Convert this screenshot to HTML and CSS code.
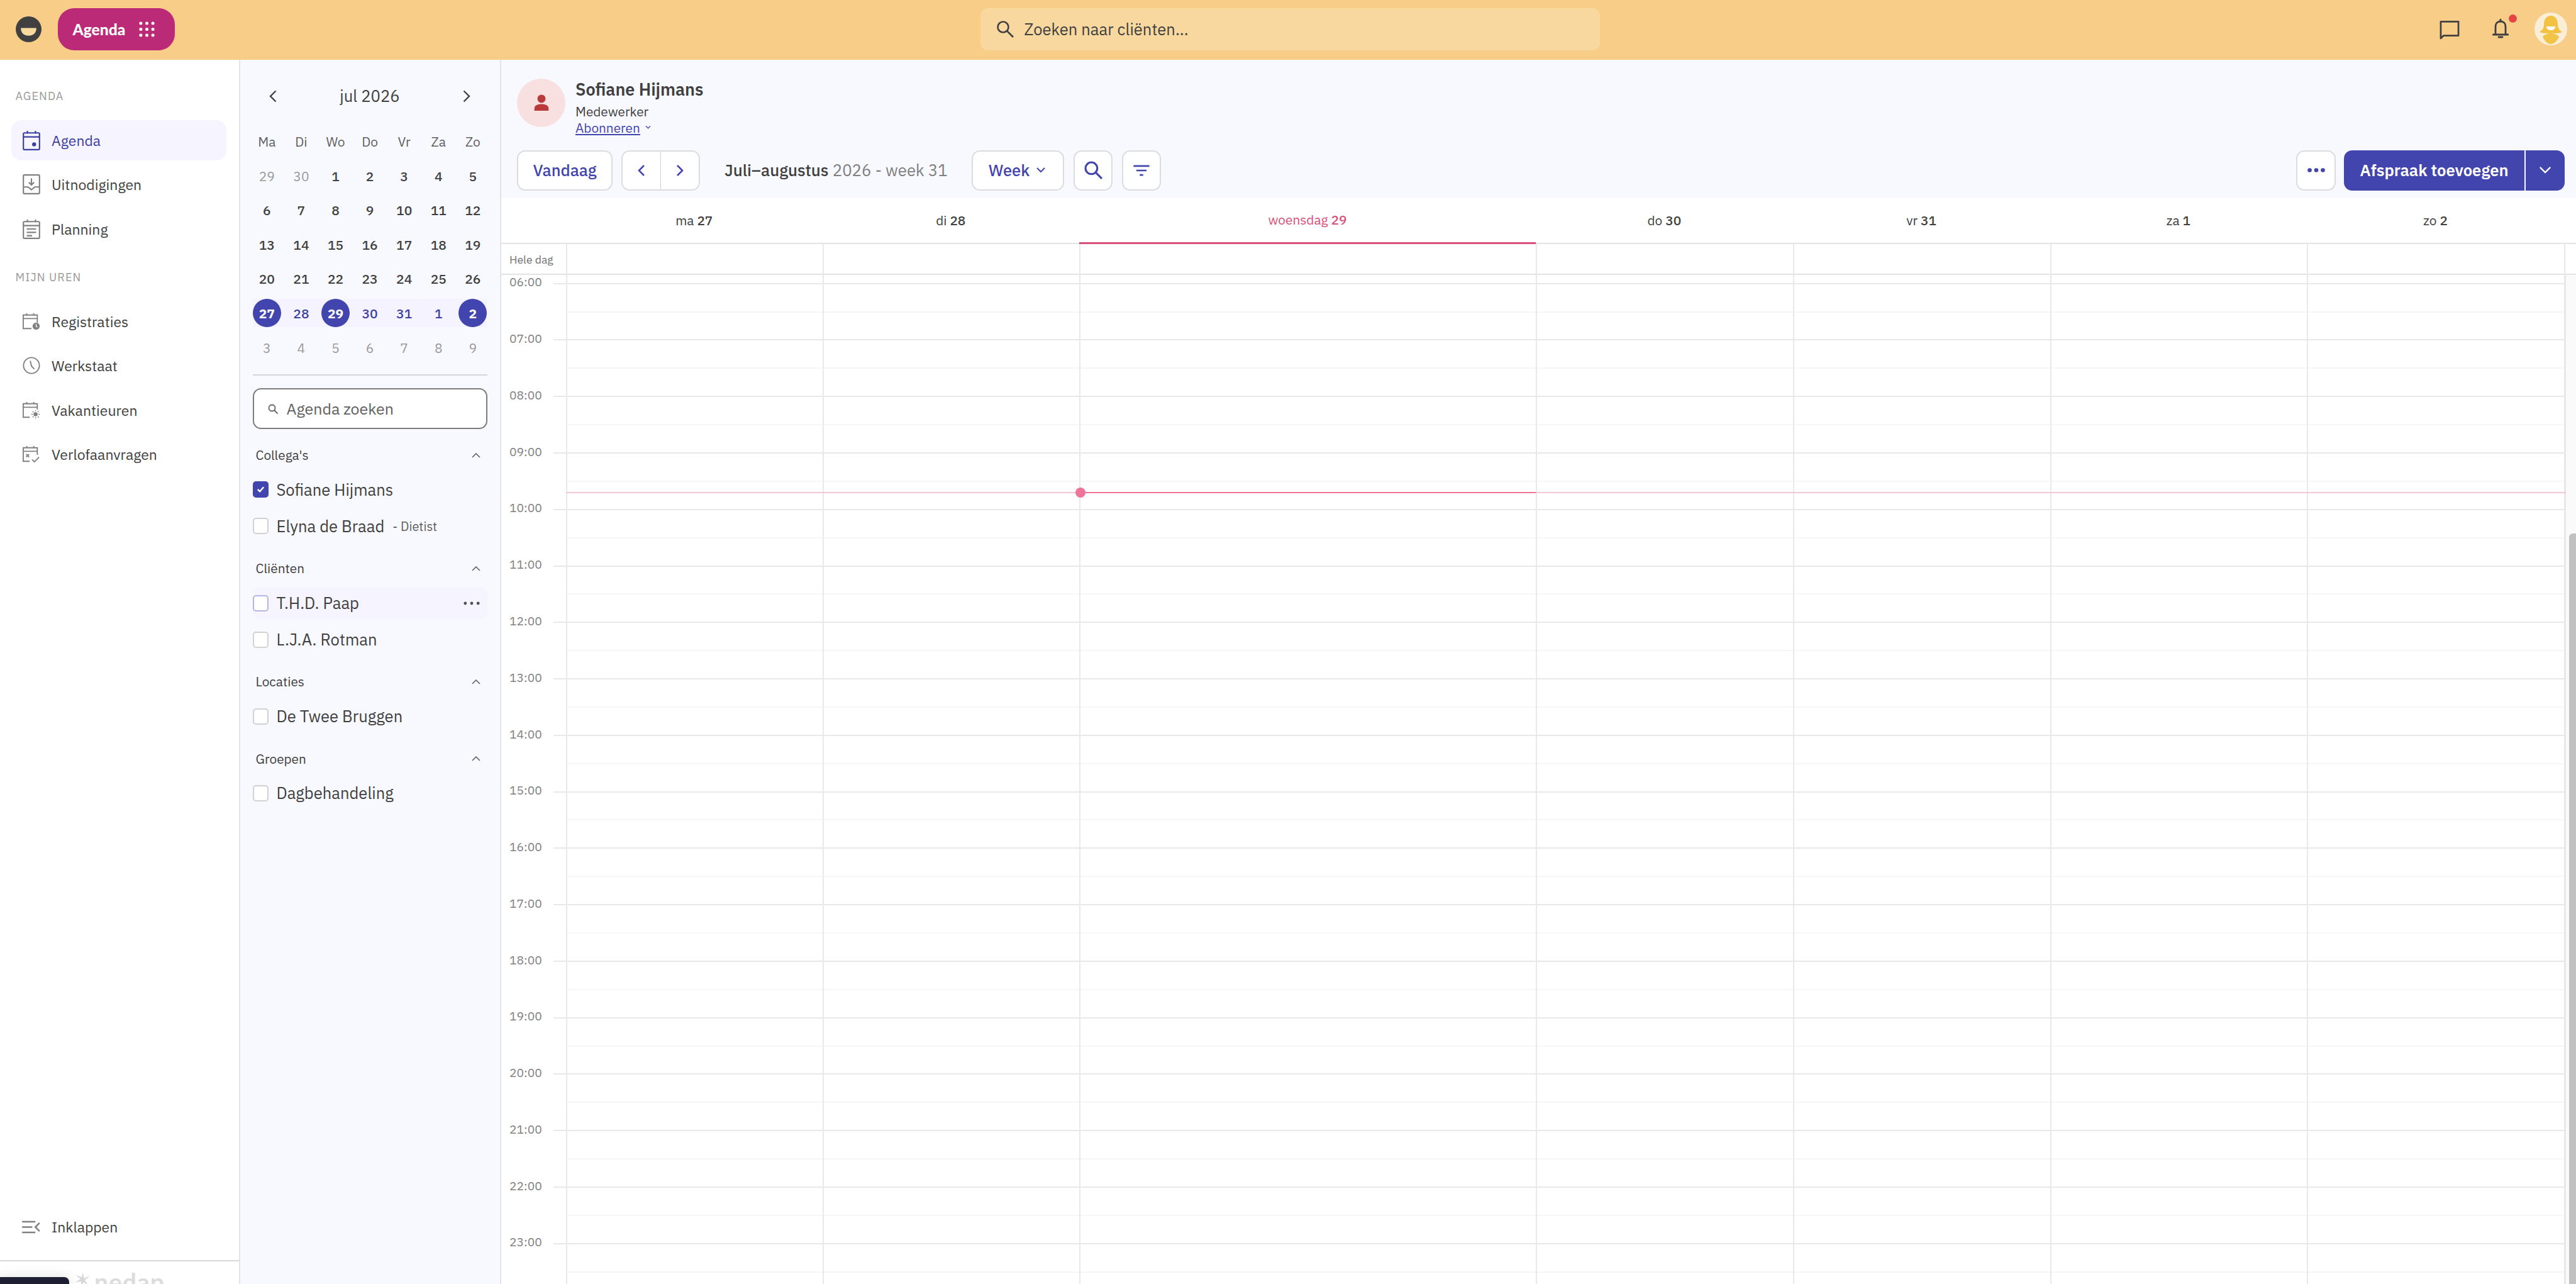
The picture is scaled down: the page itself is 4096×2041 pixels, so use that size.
FILE: index.html
```html
<!DOCTYPE html>
<html lang="nl">
<head>
    <meta charset="UTF-8">
    <title>Agenda</title>
    <link rel="stylesheet" href="styles.css">
</head>
<body>
    <header class="topbar">
        <svg class="logo" viewBox="0 0 40 40"><circle cx="20" cy="20" r="20" fill="#404040"/><path d="M8 18h24c0 8-5 12-12 12S8 26 8 18z" fill="#f8d9a0"/></svg>
        <button class="app-button">
            <span>Agenda</span>
            <svg class="app-dots" viewBox="0 0 26 26" fill="#fff"><circle cx="3" cy="3" r="2.6"/><circle cx="13" cy="3" r="2.6"/><circle cx="23" cy="3" r="2.6"/><circle cx="3" cy="13" r="2.6"/><circle cx="13" cy="13" r="2.6"/><circle cx="23" cy="13" r="2.6"/><circle cx="3" cy="23" r="2.6"/><circle cx="13" cy="23" r="2.6"/><circle cx="23" cy="23" r="2.6"/></svg>
        </button>
        <div class="client-search">
            <svg class="client-search-icon" viewBox="0 0 28 28" fill="none" stroke="#404040" stroke-width="2.6"><circle cx="11" cy="11" r="8.5"/><path d="M17.5 17.5 27 27"/></svg>
            <span>Zoeken naar cliënten...</span>
        </div>
        <div class="top-actions">
            <svg class="top-chat" viewBox="0 0 32 32" fill="none" stroke="#404040" stroke-width="2.8"><path d="M1.5 30V2.5h29v23H6z" stroke-linejoin="round"/></svg>
            <span class="bell-wrap">
                <svg class="top-bell" viewBox="0 0 26 32" fill="none" stroke="#404040" stroke-width="2.8"><path d="M1 25h24M5 25V12c0-5 3-8 8-8s8 3 8 8v13" stroke-linecap="round"/><path d="M13 0v4M10 29h6" stroke-linecap="round"/></svg>
                <span class="bell-dot"></span>
            </span>
            <svg class="top-avatar" viewBox="0 0 52 52"><circle cx="26" cy="26" r="26" fill="#fbeed6"/><path d="M26 5c-8 0-11 7-11 14 0 6-3 9-7 12 6 3 30 3 36 0-4-3-7-6-7-12 0-7-3-14-11-14z" fill="#f4c242"/><path d="M19 22h14c0 4-3 6-7 6s-7-2-7-6z" fill="#fff"/><path d="M13 38c3-3 8-5 13-5s10 2 13 5c-3 8-8 12-13 12s-10-4-13-12z" fill="#f1c446"/></svg>
        </div>
    </header>

    <div class="layout">
        <aside class="sidebar">
            <div class="nav-label">AGENDA</div>
            <nav class="nav-list">
                <a class="nav-item active">
                    <svg class="nav-icon" viewBox="0 0 26 30" fill="none" stroke="currentColor" stroke-width="2"><rect x="1" y="4" width="24" height="25" rx="1.5"/><path d="M1 10h24M7 1v4M19 1v4"/><circle cx="17" cy="21" r="3" fill="currentColor" stroke="none"/></svg>
                    Agenda
                </a>
                <a class="nav-item">
                    <svg class="nav-icon" viewBox="0 0 26 30" fill="none" stroke="#808080" stroke-width="2"><rect x="1" y="1" width="24" height="28" rx="1.5"/><path d="M13 6v10M9 12l4 4 4-4M1 19h7l5 4 5-4h7"/></svg>
                    Uitnodigingen
                </a>
                <a class="nav-item">
                    <svg class="nav-icon" viewBox="0 0 26 30" fill="none" stroke="#808080" stroke-width="2"><rect x="1" y="4" width="24" height="25" rx="1.5"/><path d="M1 10h24M7 1v4M19 1v4M6 15h14M6 20h14M6 25h8"/></svg>
                    Planning
                </a>
            </nav>
            <div class="nav-label nav-label-second">MIJN UREN</div>
            <nav class="nav-list">
                <a class="nav-item">
                    <svg class="nav-icon" viewBox="0 0 30 30" fill="none" stroke="#808080" stroke-width="2"><path d="M15 27H1V4h24v13M1 10h24M7 1v4M19 1v4"/><circle cx="23" cy="23" r="6" fill="#808080" stroke="none"/><path d="M23 19v4l2 2" stroke="#fff" stroke-width="1.4"/></svg>
                    Registraties
                </a>
                <a class="nav-item">
                    <svg class="nav-icon" viewBox="0 0 30 30" fill="none" stroke="#808080" stroke-width="2"><circle cx="15" cy="15" r="13.5"/><path d="M13 7l2 9 5 5"/></svg>
                    Werkstaat
                </a>
                <a class="nav-item">
                    <svg class="nav-icon" viewBox="0 0 30 30" fill="none" stroke="#808080" stroke-width="2"><path d="M12 27H1V4h24v10M1 10h24M7 1v4M19 1v4"/><circle cx="22" cy="22" r="3.5" fill="#808080" stroke="none"/><path d="M22 15v2M22 27v2M15 22h2M27 22h2M17 17l1.500 1.500M26 26l1.500 1.500M17 27l1.500-1.500M26 18l1.500-1.500" stroke-width="1.500"/></svg>
                    Vakantieuren
                </a>
                <a class="nav-item">
                    <svg class="nav-icon" viewBox="0 0 30 30" fill="none" stroke="#808080" stroke-width="2"><path d="M12 27H1V4h24v12M1 10h24M7 1v4M19 1v4M6 15l5 5M11 15l-5 5M16 24l4 4 8-8"/></svg>
                    Verlofaanvragen
                </a>
            </nav>
            <a class="nav-item collapse">
                <svg class="collapse-icon" viewBox="0 0 30 22" fill="none" stroke="#808080" stroke-width="2.600"><path d="M0 2h22M0 11h17M0 20h22M29 4l-7 7 7 7"/></svg>
                Inklappen
            </a>
            <div class="sidebar-foot">
                <div class="foot-tab"></div>
                <svg class="nedap-star" viewBox="0 0 26 26" fill="#d8d8d8"><path d="M13 0l1.500 10L24 6l-8 7 6 9-8-6-5 9 1-10-9 1 8-5-8-6 10 3z"/></svg>
                <span class="nedap-text">nedap</span>
            </div>
        </aside>

        <section class="panel">
            <div class="month-head">
                <svg class="chev" viewBox="0 0 12 20" fill="none" stroke="#404040" stroke-width="2.400"><path d="M10.500 1.500 2 10l8.500 8.500"/></svg>
                <span class="month-title">jul 2026</span>
                <svg class="chev" viewBox="0 0 12 20" fill="none" stroke="#404040" stroke-width="2.400"><path d="M1.500 1.500 10 10l-8.500 8.500"/></svg>
            </div>
            <div class="month-grid">
                <div class="cell day-name">Ma</div><div class="cell day-name">Di</div><div class="cell day-name">Wo</div><div class="cell day-name">Do</div><div class="cell day-name">Vr</div><div class="cell day-name">Za</div><div class="cell day-name">Zo</div>
                <div class="cell faded">29</div><div class="cell faded">30</div><div class="cell">1</div><div class="cell">2</div><div class="cell">3</div><div class="cell">4</div><div class="cell">5</div>
                <div class="cell">6</div><div class="cell">7</div><div class="cell">8</div><div class="cell">9</div><div class="cell">10</div><div class="cell">11</div><div class="cell">12</div>
                <div class="cell">13</div><div class="cell">14</div><div class="cell">15</div><div class="cell">16</div><div class="cell">17</div><div class="cell">18</div><div class="cell">19</div>
                <div class="cell">20</div><div class="cell">21</div><div class="cell">22</div><div class="cell">23</div><div class="cell">24</div><div class="cell">25</div><div class="cell">26</div>
                <div class="cell week week-start"><span class="picked">27</span></div><div class="cell week">28</div><div class="cell week"><span class="picked">29</span></div><div class="cell week">30</div><div class="cell week">31</div><div class="cell week">1</div><div class="cell week week-end"><span class="picked">2</span></div>
                <div class="cell faded">3</div><div class="cell faded">4</div><div class="cell faded">5</div><div class="cell faded">6</div><div class="cell faded">7</div><div class="cell faded">8</div><div class="cell faded">9</div>
            </div>
            <div class="filters">
                <div class="agenda-search">
                    <svg class="agenda-search-icon" viewBox="0 0 16 16" fill="none" stroke="#606060" stroke-width="1.800"><circle cx="6.500" cy="6.500" r="5"/><path d="M10 10l5.500 5.500"/></svg>
                    <span>Agenda zoeken</span>
                </div>

                <div class="filter-group">
                    <div class="filter-head"><span>Collega's</span><svg class="up" viewBox="0 0 14 8" fill="none" stroke="#606060" stroke-width="1.600"><path d="M1 7l6-6 6 6"/></svg></div>
                    <div class="filter-row">
                        <span class="check checked"><svg viewBox="0 0 16 16" fill="none" stroke="#fff" stroke-width="2.600"><path d="M3 8.500l3.500 3.500L13 4.500"/></svg></span>
                        <span>Sofiane Hijmans</span>
                    </div>
                    <div class="filter-row">
                        <span class="check"></span>
                        <span>Elyna de Braad</span><span class="role">- Dietist</span>
                    </div>
                </div>

                <div class="filter-group">
                    <div class="filter-head"><span>Cliënten</span><svg class="up" viewBox="0 0 14 8" fill="none" stroke="#606060" stroke-width="1.600"><path d="M1 7l6-6 6 6"/></svg></div>
                    <div class="filter-row hovered">
                        <span class="check"></span>
                        <span>T.H.D. Paap</span>
                        <svg class="row-dots" viewBox="0 0 28 6" fill="#505050"><circle cx="3" cy="3" r="2.600"/><circle cx="14" cy="3" r="2.600"/><circle cx="25" cy="3" r="2.600"/></svg>
                    </div>
                    <div class="filter-row">
                        <span class="check"></span>
                        <span>L.J.A. Rotman</span>
                    </div>
                </div>

                <div class="filter-group">
                    <div class="filter-head"><span>Locaties</span><svg class="up" viewBox="0 0 14 8" fill="none" stroke="#606060" stroke-width="1.600"><path d="M1 7l6-6 6 6"/></svg></div>
                    <div class="filter-row">
                        <span class="check"></span>
                        <span>De Twee Bruggen</span>
                    </div>
                </div>

                <div class="filter-group">
                    <div class="filter-head"><span>Groepen</span><svg class="up" viewBox="0 0 14 8" fill="none" stroke="#606060" stroke-width="1.600"><path d="M1 7l6-6 6 6"/></svg></div>
                    <div class="filter-row">
                        <span class="check"></span>
                        <span>Dagbehandeling</span>
                    </div>
                </div>
            </div>
        </section>

        <main class="main">
            <div class="main-head">
                <div class="profile">
                    <div class="profile-avatar">
                        <svg viewBox="0 0 26 30" fill="#b93a3a"><circle cx="13" cy="8" r="7.500"/><path d="M0 30v-4c0-5 5-8 13-8s13 3 13 8v4z"/></svg>
                    </div>
                    <div class="profile-text">
                        <div class="profile-name">Sofiane Hijmans</div>
                        <div class="profile-role">Medewerker</div>
                        <div class="profile-sub"><a>Abonneren</a><svg viewBox="0 0 10 6" fill="none" stroke="#4345ae" stroke-width="1.400"><path d="M1 1l4 4 4-4"/></svg></div>
                    </div>
                </div>
                <div class="toolbar">
                    <button class="btn btn-today">Vandaag</button>
                    <div class="btn btn-pair">
                        <span class="pair-part"><svg class="btn-chev" viewBox="0 0 12 20" fill="none" stroke="#4345ae" stroke-width="2.600"><path d="M10 2 2 10l8 8"/></svg></span>
                        <span class="pair-part pair-right"><svg class="btn-chev" viewBox="0 0 12 20" fill="none" stroke="#4345ae" stroke-width="2.600"><path d="M2 2l8 8-8 8"/></svg></span>
                    </div>
                    <div class="range"><strong>Juli–augustus</strong> 2026 - week 31</div>
                    <button class="btn btn-week">Week <svg viewBox="0 0 14 9" fill="none" stroke="#4345ae" stroke-width="2"><path d="M1 1l6 6 6-6"/></svg></button>
                    <button class="btn btn-icon"><svg class="icon-search" viewBox="0 0 28 28" fill="none" stroke="#4345ae" stroke-width="3"><circle cx="11" cy="11" r="9"/><path d="M18 18l9 9"/></svg></button>
                    <button class="btn btn-icon"><svg class="icon-filter" viewBox="0 0 28 20" fill="none" stroke="#4345ae" stroke-width="3"><path d="M0 2h28M5 10h18M11 18h6"/></svg></button>
                    <button class="btn btn-more"><svg class="icon-more" viewBox="0 0 32 8" fill="#4345ae"><circle cx="4" cy="4" r="3.800"/><circle cx="16" cy="4" r="3.800"/><circle cx="28" cy="4" r="3.800"/></svg></button>
                    <div class="add-group">
                        <button class="add-main">Afspraak toevoegen</button>
                        <button class="add-more"><svg viewBox="0 0 22 14" fill="none" stroke="#fff" stroke-width="2.600"><path d="M2 2l9 9 9-9"/></svg></button>
                    </div>
                </div>
            </div>

            <div class="week-head">
                <div></div>
                <div class="week-day">ma <b>27</b></div>
                <div class="week-day">di <b>28</b></div>
                <div class="week-day today">woensdag <b>29</b></div>
                <div class="week-day">do <b>30</b></div>
                <div class="week-day">vr <b>31</b></div>
                <div class="week-day">za <b>1</b></div>
                <div class="week-day">zo <b>2</b></div>
            </div>

            <div class="cal-area">
                <div class="all-day">
                    <div class="all-day-label">Hele dag</div>
                </div>
                <div class="cal-body">
                    <div class="hours">
                        <div class="hour"><span class="hour-label">06:00</span><div class="hour-line"></div></div>
                        <div class="hour"><span class="hour-label">07:00</span><div class="hour-line"></div></div>
                        <div class="hour"><span class="hour-label">08:00</span><div class="hour-line"></div></div>
                        <div class="hour"><span class="hour-label">09:00</span><div class="hour-line"></div></div>
                        <div class="hour"><span class="hour-label">10:00</span><div class="hour-line"></div></div>
                        <div class="hour"><span class="hour-label">11:00</span><div class="hour-line"></div></div>
                        <div class="hour"><span class="hour-label">12:00</span><div class="hour-line"></div></div>
                        <div class="hour"><span class="hour-label">13:00</span><div class="hour-line"></div></div>
                        <div class="hour"><span class="hour-label">14:00</span><div class="hour-line"></div></div>
                        <div class="hour"><span class="hour-label">15:00</span><div class="hour-line"></div></div>
                        <div class="hour"><span class="hour-label">16:00</span><div class="hour-line"></div></div>
                        <div class="hour"><span class="hour-label">17:00</span><div class="hour-line"></div></div>
                        <div class="hour"><span class="hour-label">18:00</span><div class="hour-line"></div></div>
                        <div class="hour"><span class="hour-label">19:00</span><div class="hour-line"></div></div>
                        <div class="hour"><span class="hour-label">20:00</span><div class="hour-line"></div></div>
                        <div class="hour"><span class="hour-label">21:00</span><div class="hour-line"></div></div>
                        <div class="hour"><span class="hour-label">22:00</span><div class="hour-line"></div></div>
                        <div class="hour"><span class="hour-label">23:00</span><div class="hour-line"></div></div>
                    </div>
                    <div class="scrollbar"><div class="scroll-thumb"></div></div>
                </div>
                <!-- vertical day lines and the now marker lie over the rows -->
                <div class="day-lines">
                    <div></div><div></div><div class="today-col"><span class="now-dark"></span><span class="now-dot"></span></div><div></div><div></div><div></div><div></div>
                </div>
                <div class="now-pale"></div>
            </div>
        </main>
    </div>
</body>
</html>
```

FILE: styles.css
```css
* {
    box-sizing: border-box;
}

html, body {
    height: 100%;
}

body {
    margin: 0;
    display: flex;
    flex-direction: column;
    overflow: hidden;
    font-family: "IBM Plex Sans", Roboto, "Noto Sans", sans-serif;
    font-size: 22.4px;
    color: #404040;
    background-color: #fff;
}

button {
    font-family: inherit;
}

svg {
    display: block;
    flex: none;
}

/* top bar */
.topbar {
    height: 94.6px;
    flex: none;
    display: flex;
    align-items: center;
    padding: 0 14px 2px 24.500px;
    background-color: #f8cd88;
}

.logo {
    width: 41px;
    height: 41px;
}

.app-button {
    width: 186px;
    height: 67px;
    margin-left: 26px;
    padding: 0 32px 0 24px;
    display: flex;
    align-items: center;
    justify-content: space-between;
    border: none;
    border-radius: 26px;
    background-color: #bb2a76;
    color: #fff;
    font-family: Lato, sans-serif;
    font-size: 24.600px;
    font-weight: 900;
}

.app-dots {
    width: 25px;
    height: 25px;
}

.client-search {
    width: 985px;
    height: 67px;
    margin-left: 1281px;
    padding: 0 25px;
    display: flex;
    align-items: center;
    gap: 17px;
    border-radius: 12px;
    background-color: #f9d89f;
    font-size: 25.600px;
}

.client-search-icon {
    width: 28px;
    height: 28px;
}

.top-actions {
    margin-left: auto;
    display: flex;
    align-items: center;
}

.top-chat {
    width: 32px;
    height: 31px;
    margin-top: 2px;
}

.bell-wrap {
    position: relative;
    margin-left: 52px;
}

.top-bell {
    width: 26px;
    height: 32px;
}

.bell-dot {
    position: absolute;
    top: -7px;
    right: -13px;
    width: 13px;
    height: 13px;
    border-radius: 50%;
    background-color: #e54444;
}

.top-avatar {
    width: 52px;
    height: 52px;
    margin-left: 41px;
}

.layout {
    flex: 1;
    min-height: 0;
    display: flex;
}

/* first column */
.sidebar {
    width: 382px;
    flex: none;
    display: flex;
    flex-direction: column;
    padding-top: 46.400px;
    border-right: 2px solid #e3e4ea;
    overflow: hidden;
}

.nav-label {
    height: 24px;
    margin: 0 0 26px 24.500px;
    line-height: 24px;
    font-size: 18px;
    letter-spacing: 1.100px;
    color: #9a9a9a;
}

.nav-label-second {
    margin-top: 33px;
}

.nav-list {
    display: flex;
    flex-direction: column;
    gap: 6.500px;
    padding: 0 20px 0 18px;
}

.nav-item {
    height: 64px;
    display: flex;
    align-items: center;
    gap: 18px;
    padding-left: 18px;
    border-radius: 16px;
    font-size: 23px;
}

.nav-item.active {
    background-color: #f5f4ff;
    color: #3b3da0;
}

.nav-icon {
    width: 28px;
    height: 32px;
}

.collapse {
    margin: auto 0 21px 18px;
    padding-left: 17px;
    gap: 18px;
    flex: none;
}

.collapse-icon {
    width: 29px;
    height: 21px;
}

.sidebar-foot {
    position: relative;
    height: 38px;
    flex: none;
    display: flex;
    padding-left: 119px;
    gap: 5px;
    border-top: 2px solid #d9d9d9;
    overflow: hidden;
}

.foot-tab {
    position: absolute;
    left: 0;
    bottom: -30px;
    width: 110px;
    height: 41px;
    border-radius: 0 8px 0 0;
    background-color: #1f1f33;
    box-shadow: 0 0 20px rgba(0, 0, 0, 0.12);
}

.nedap-star {
    width: 26px;
    height: 26px;
    margin-top: 17px;
}

.nedap-text {
    margin-top: 7px;
    font-family: Lato, sans-serif;
    font-size: 39px;
    font-weight: 700;
    line-height: 50px;
    letter-spacing: 1px;
    color: #dcdcdc;
}

/* second column */
.panel {
    width: 415px;
    flex: none;
    padding: 31.400px 16px 0 15px;
    border-right: 2px solid #e3e4ea;
    background-color: #f8f9ff;
}

.month-head {
    height: 54px;
    display: flex;
    align-items: center;
    justify-content: space-between;
    padding: 0 31px;
}

.month-title {
    font-size: 25.600px;
}

.chev {
    width: 12px;
    height: 20px;
}

.month-grid {
    margin-top: 17.700px;
    display: grid;
    grid-template-columns: repeat(7, 54.600px);
    grid-auto-rows: 54.600px;
}

.cell {
    display: flex;
    align-items: center;
    justify-content: center;
    font-size: 21px;
    font-weight: 500;
    color: #404040;
}

.day-name {
    font-weight: 400;
    color: #606060;
}

.faded {
    font-weight: 400;
    color: #9a9a9a;
}

.week {
    color: #3d3fa6;
    background: linear-gradient(#f4f3ff, #f4f3ff) no-repeat center / 100% 45px;
}

.week-start {
    background-size: 50px 45px;
    background-position: right center;
}

.week-end {
    background-size: 50px 45px;
    background-position: left center;
}

.picked {
    width: 45px;
    height: 45px;
    display: flex;
    align-items: center;
    justify-content: center;
    border-radius: 50%;
    background-color: #4345ae;
    color: #fff;
    font-weight: 700;
}

.filters {
    margin: 15px 4px 0 4.500px;
    padding-top: 20px;
    border-top: 2px solid #d5d5dc;
}

.agenda-search {
    height: 65.500px;
    display: flex;
    align-items: center;
    gap: 14px;
    padding-left: 22px;
    margin-bottom: 17.200px;
    border: 2px solid #7c7c7c;
    border-radius: 13px;
    background-color: #fff;
    color: #606060;
    font-size: 25px;
}

.agenda-search-icon {
    width: 16px;
    height: 16px;
}

.filter-group {
    margin-bottom: 18px;
    display: flex;
    flex-direction: column;
    gap: 7.400px;
}

.filter-head {
    height: 48px;
    margin-bottom: -1.800px;
    padding: 0 11px 0 5px;
    display: flex;
    align-items: center;
    justify-content: space-between;
    font-size: 20.800px;
}

.up {
    width: 14px;
    height: 8px;
}

.filter-row {
    height: 50.600px;
    display: flex;
    align-items: center;
    gap: 13px;
    border-radius: 10px;
    font-size: 25.600px;
}

.filter-row.hovered {
    background-color: #f5f4ff;
}

.filter-row.hovered .check {
    border-color: #b4b5e8;
}

.check {
    width: 25px;
    height: 26px;
    flex: none;
    border: 2px solid #d2d2d2;
    border-radius: 5px;
    background-color: #fff;
}

.check.checked {
    padding: 3px;
    border-color: #4345ae;
    background-color: #4345ae;
}

.role {
    margin-left: 0;
    font-size: 20px;
    color: #606060;
}

.row-dots {
    width: 26px;
    height: 6px;
    margin-left: auto;
    margin-right: 12px;
}

/* main column */
.main {
    flex: 1;
    min-width: 0;
    display: flex;
    flex-direction: column;
}

.main-head {
    height: 220.400px;
    flex: none;
    padding: 30.400px 18px 0 25px;
    background-color: #f8f9ff;
}

.profile {
    height: 114px;
    display: flex;
    gap: 16px;
}

.profile-avatar {
    width: 77px;
    height: 77px;
    display: flex;
    align-items: center;
    justify-content: center;
    border-radius: 50%;
    background-color: #f8e0e0;
}

.profile-avatar svg {
    width: 24px;
    height: 26px;
}

.profile-text {
    height: 100%;
}

.profile-name {
    height: 33px;
    line-height: 33px;
    font-size: 27px;
    font-weight: 600;
}

.profile-role {
    height: 26px;
    margin-top: 7px;
    line-height: 26px;
    font-size: 20.800px;
}

.profile-sub {
    display: flex;
    align-items: center;
    gap: 8px;
    height: 26px;
    line-height: 26px;
    font-size: 20.800px;
    color: #4345ae;
}

.profile-sub a {
    text-decoration: underline;
}

.profile-sub svg {
    width: 9px;
    height: 6px;
    margin-top: -4px;
}

.toolbar {
    display: flex;
    align-items: center;
    height: 64px;
}

.btn {
    height: 64px;
    display: flex;
    align-items: center;
    justify-content: center;
    padding: 0;
    border: 2px solid #dcdcdf;
    border-radius: 13px;
    background-color: #fff;
    color: #4345ae;
    font-size: 25.600px;
    font-weight: 500;
}

.btn-today {
    width: 152px;
}

.btn-pair {
    width: 125px;
    margin-left: 14px;
}

.pair-part {
    flex: 1;
    height: 100%;
    display: flex;
    align-items: center;
    justify-content: center;
}

.pair-right {
    border-left: 1px solid #cfcfd4;
}

.btn-chev {
    width: 12px;
    height: 20px;
}

.range {
    width: 353px;
    margin: 0 40px 0 39px;
    white-space: nowrap;
    font-size: 25.800px;
    color: #808080;
}

.range strong {
    font-weight: 500;
    color: #404040;
}

.btn-week {
    width: 147px;
    gap: 11px;
    padding-right: 3px;
}

.btn-week svg {
    width: 14px;
    height: 9px;
}

.btn-icon {
    width: 62px;
    margin-left: 15px;
}

.icon-search {
    width: 29px;
    height: 29px;
}

.icon-filter {
    width: 28px;
    height: 18px;
}

.btn-more {
    width: 63px;
    margin-left: auto;
}

.icon-more {
    width: 28px;
    height: 7px;
}

.add-group {
    display: flex;
    margin-left: 13px;
    gap: 2px;
}

.add-main,
.add-more {
    height: 64px;
    border: none;
    background-color: #4345ae;
    color: #fff;
}

.add-main {
    width: 287px;
    border-radius: 13px 0 0 13px;
    font-size: 25.600px;
    font-weight: 600;
}

.add-more {
    width: 62px;
    display: flex;
    align-items: center;
    justify-content: center;
    padding: 0;
    border-radius: 0 13px 13px 0;
}

.add-more svg {
    width: 20px;
    height: 13px;
}

/* calendar */
.week-head {
    height: 73px;
    flex: none;
    display: grid;
    grid-template-columns: 103px 407.500px 408.500px 726px repeat(4, 1fr);
    padding-right: 19px;
    border-bottom: 2px solid #e4e4e4;
    background-color: #fff;
}

.week-day {
    display: flex;
    align-items: center;
    justify-content: center;
    gap: 5px;
    font-size: 20.800px;
}

.week-day b {
    font-weight: 500;
}

.week-day.today {
    margin-bottom: -2px;
    border-bottom: 3px solid #d94f7a;
    color: #d94f7a;
}

.cal-area {
    position: relative;
    flex: 1;
    min-height: 0;
    display: flex;
    flex-direction: column;
}

.all-day {
    height: 49px;
    flex: none;
    display: flex;
    align-items: center;
    padding: 2px 0 0 13px;
    border-bottom: 2px solid #e4e4e4;
}

.all-day-label {
    font-size: 17.600px;
    color: #707070;
}

.cal-body {
    flex: 1;
    min-height: 0;
    display: flex;
}

.hours {
    flex: 1;
    min-width: 0;
    padding-top: 12.700px;
    overflow: hidden;
    border-right: 3px solid #e8e8e8;
}

.hour {
    height: 89.780px;
    display: flex;
}

.hour-label {
    width: 83px;
    height: 20px;
    margin-top: -11.300px;
    padding-left: 13px;
    line-height: 20px;
    font-size: 19.200px;
    color: #808080;
}

.hour-line {
    flex: 1;
    border-top: 2px solid #e8e8e8;
}

.hour-line::after {
    content: "";
    display: block;
    margin: 42.900px 0 0 20px;
    border-top: 2px solid #f6f6f6;
}

.day-lines {
    position: absolute;
    top: 0;
    right: 17px;
    bottom: 0;
    left: 103px;
    display: grid;
    grid-template-columns: 407.500px 408.500px 726px repeat(4, 1fr);
    border-right: 2px solid #e8e8e8;
}

.day-lines > div {
    position: relative;
    border-left: 2px solid #e9e9e9;
}

.now-pale {
    position: absolute;
    top: 394px;
    right: 16px;
    left: 103px;
    height: 2px;
    background-color: #f5c6d6;
}

.now-dark {
    position: absolute;
    z-index: 2;
    top: 394px;
    left: 0;
    right: 0;
    height: 2px;
    background-color: #ee7598;
}

.now-dot {
    position: absolute;
    z-index: 2;
    top: 387px;
    left: -8px;
    width: 16px;
    height: 16px;
    border-radius: 50%;
    background-color: #ee7598;
}

.day-lines > .today-col {
    z-index: 1;
}

.scrollbar {
    width: 16px;
    flex: none;
    display: flex;
    flex-direction: column;
    align-items: flex-end;
    padding-top: 411px;
    background-color: #fafafa;
}

.scroll-thumb {
    flex: 1;
    width: 11px;
    border-radius: 6px 0 0 0;
    background-color: #c1c1c1;
}
```
